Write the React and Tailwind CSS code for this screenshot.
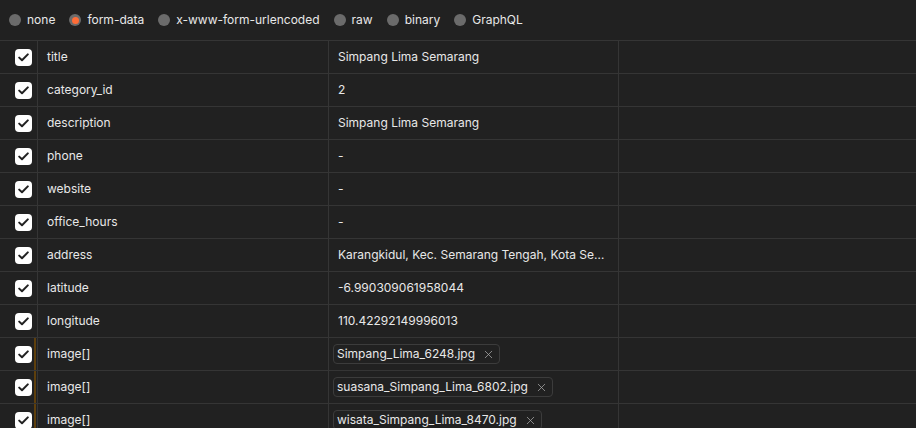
import { X } from "lucide-react";

const bodyTypes = ["none", "form-data", "x-www-form-urlencoded", "raw", "binary", "GraphQL"];

const rows = [
  { key: "title", value: "Simpang Lima Semarang" },
  { key: "category_id", value: "2" },
  { key: "description", value: "Simpang Lima Semarang" },
  { key: "phone", value: "-" },
  { key: "website", value: "-" },
  { key: "office_hours", value: "-" },
  { key: "address", value: "Karangkidul, Kec. Semarang Tengah, Kota Semarang, Jawa Tengah" },
  { key: "latitude", value: "-6.990309061958044" },
  { key: "longitude", value: "110.42292149996013" },
  { key: "image[]", file: "Simpang_Lima_6248.jpg" },
  { key: "image[]", file: "suasana_Simpang_Lima_6802.jpg" },
  { key: "image[]", file: "wisata_Simpang_Lima_8470.jpg" },
];

function Check() {
  return (
    <span className="w-[17px] h-[17px] rounded-[4px] bg-white flex items-center justify-center">
      <svg width="11" height="9" viewBox="0 0 11 9" fill="none">
        <path d="M1.2 4.6 L4 7.3 L9.8 1.4" stroke="#212121" strokeWidth="2" strokeLinecap="round" strokeLinejoin="round" />
      </svg>
    </span>
  );
}

function App() {
  return (
    <div
      className="w-[916px] h-[428px] overflow-hidden bg-[#212121] text-[12px] text-[#e8e8e8]"
      style={{ fontFamily: "Inter, 'Noto Sans', sans-serif" }}
    >
      <div className="h-[41px] flex items-center pl-[9px] gap-[14px] border-b border-[#353535]">
        {bodyTypes.map((t) => (
          <label key={t} className="flex items-center gap-[6px]">
            {t === "form-data" ? (
              <span className="w-[12px] h-[12px] rounded-full bg-[#6b6b6b] flex items-center justify-center">
                <span className="w-[7px] h-[7px] rounded-full bg-[#ff6c37]" />
              </span>
            ) : (
              <span className="w-[12px] h-[12px] rounded-full bg-[#6b6b6b]" />
            )}
            <span>{t}</span>
          </label>
        ))}
      </div>
      {rows.map((r, i) => (
        <div key={i} className="grid grid-cols-[38px_291px_290px_1fr] h-[33px] border-b border-[#353535]">
          <div className="relative flex items-center justify-end pr-[5px] border-r border-[#353535]">
            <Check />
            {r.file && <span className="absolute right-[1px] top-0 bottom-0 w-[2px] bg-[#5e3f0c]" />}
          </div>
          <div className="flex items-center px-[9px] border-r border-[#353535]">{r.key}</div>
          <div className={`flex items-center border-r border-[#353535] min-w-0 ${r.file ? "px-[4px]" : "px-[9px]"}`}>
            {r.file ? (
              <span className="h-[20px] flex items-center gap-[7px] pl-[3px] pr-[4px] rounded-[4px] border border-[#3c3c3c]">
                <span>{r.file}</span>
                <X className="w-[13px] h-[13px] text-[#a8a8a8]" strokeWidth={1.4} />
              </span>
            ) : (
              <span className="truncate">{r.value}</span>
            )}
          </div>
          <div />
        </div>
      ))}
    </div>
  );
}

export default App;
